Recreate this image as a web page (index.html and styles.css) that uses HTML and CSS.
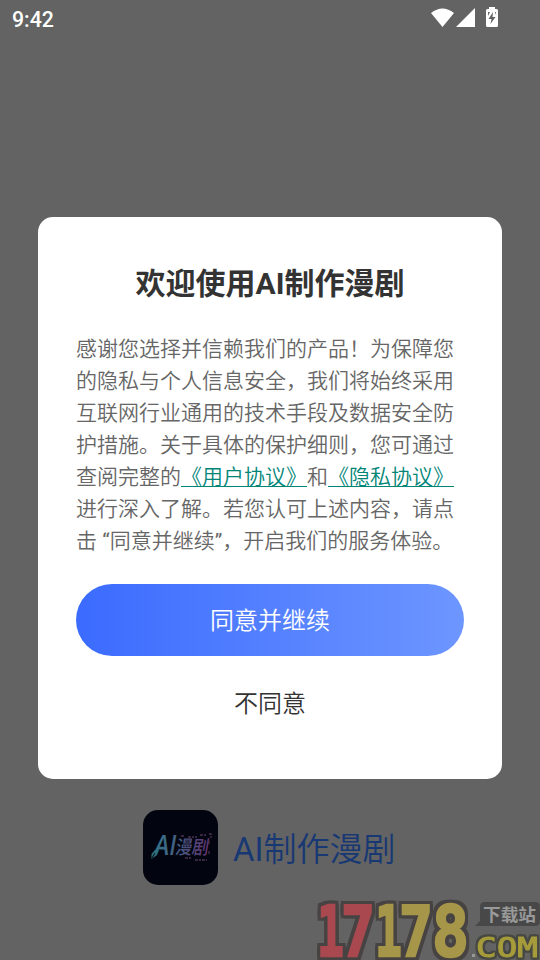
FILE: index.html
```html
<!DOCTYPE html>
<html lang="zh-CN">
<head>
<meta charset="utf-8">
<title>AI制作漫剧</title>
<link rel="stylesheet" href="styles.css">
</head>
<body>
<div class="screen">
  <header class="status">
    <span class="clock">9:42</span>
    <svg class="status-icons" width="70" height="22" viewBox="0 0 70 22">
      <path d="M1 5Q12.500-4 24 5L12.500 19Z"/>
      <path d="M45 0V19H26Z"/>
      <path d="M59 1V-1H65V1H66.500Q68 1 68 2.500V17.500Q68 19 66.500 19H57.500Q56 19 56 17.500V2.500Q56 1 57.500 1Z"/>
      <path class="bolt" d="M63 4L58.500 11H61.500L60.500 16L65.500 9H62.500ZM58 4H60L58 8ZM65 4H66V7Z"/>
    </svg>
  </header>
  <main class="dialog">
    <h1>欢迎使用AI制作漫剧</h1>
    <p class="terms">感谢您选择并信赖我们的产品！为保障您<br>的隐私与个人信息安全，我们将始终采用<br>互联网行业通用的技术手段及数据安全防<br>护措施。关于具体的保护细则，您可通过<br>查阅完整的<a>《用户协议》</a>和<a>《隐私协议》</a><br>进行深入了解。若您认可上述内容，请点<br>击<span class="latin"> “</span>同意并继续<span class="latin">”</span>，开启我们的服务体验。</p>
    <button class="agree">同意并继续</button>
    <button class="decline">不同意</button>
  </main>
  <footer class="brand">
    <svg class="logo" width="75" height="75" viewBox="0 0 75 75">
      <defs><linearGradient id="ink" gradientUnits="userSpaceOnUse" x1="8" y1="0" x2="76" y2="0"><stop offset="0" stop-color="#2e7f8a"/><stop offset=".5" stop-color="#435a80"/><stop offset="1" stop-color="#6b3174"/></linearGradient></defs>
      <rect width="75" height="75" rx="15" fill="#02050f"/>
      <g transform="skewX(-10)" fill="url(#ink)">
        <text class="logo-ai" x="18" y="45" textLength="22" lengthAdjust="spacingAndGlyphs">AI</text>
        <text class="logo-cn" x="39.500" y="44.500" textLength="33" lengthAdjust="spacingAndGlyphs">漫剧</text>
      </g>
      <path d="M12 40L8.500 44V49L14 45L16 40Z" fill="#2e7280"/>
      <path d="M9 48L12 43" stroke="#02050f"/>
      <path d="M38 26H41M45 27H54M57 25H64M66 24H68V28M66 31V35M66 41V45M42 48H49M52 50H64" fill="none" stroke="#493153" stroke-width="1.300" stroke-dasharray="3 1 2 1"/>
    </svg>
    <span class="brand-name"><span class="latin">AI</span>制作漫剧</span>
  </footer>
  <svg class="watermark" width="230" height="70" viewBox="0 0 230 70">
    <path class="bubble" d="M175 12H225Q230 12 230 17V31Q230 36 225 36H165L170 31V17Q170 12 175 12Z"/>
    <g class="digits">
      <g class="red">
        <text x="7" y="66" textLength="27" lengthAdjust="spacingAndGlyphs">1</text>
        <text x="31" y="66" textLength="34" lengthAdjust="spacingAndGlyphs">7</text>
      </g>
      <g class="gold">
        <text x="65" y="66" textLength="27" lengthAdjust="spacingAndGlyphs">1</text>
        <text x="89" y="66" textLength="34" lengthAdjust="spacingAndGlyphs">7</text>
        <text x="122" y="66" textLength="37" lengthAdjust="spacingAndGlyphs">8</text>
      </g>
    </g>
    <text class="station" x="173" y="31" textLength="53" lengthAdjust="spacingAndGlyphs">下载站</text>
    <rect x="162" y="64" width="3" height="3" fill="#999"/>
    <text class="com" x="166" y="67" textLength="62" lengthAdjust="spacingAndGlyphs">COM</text>
  </svg>
</div>
</body>
</html>
```
FILE: styles.css
```css
* { box-sizing: border-box; }
body { margin: 0; font-family: Roboto, "Noto Sans CJK SC", sans-serif; }
.screen {
  position: relative;
  width: 540px;
  height: 960px;
  overflow: hidden;
  background: #636363;
  display: flex;
  flex-direction: column;
  align-items: center;
}
.status {
  width: 100%;
  height: 217px;
  padding: 8px 40px 0 12px;
  display: flex;
  justify-content: space-between;
  align-items: flex-start;
  color: #fff;
}
.clock { font-size: 21.3px; line-height: 23px; font-weight: 500; }
.status-icons { fill: #fff; overflow: visible; }
.status-icons .bolt { fill: #636363; }
.latin { font-weight: 400; }
.dialog {
  width: 464px;
  height: 562px;
  padding: 45px 38px 0;
  border-radius: 15px;
  background: #fff;
}
h1 {
  margin: 0;
  font-size: 30px;
  line-height: 44px;
  font-weight: 700;
  text-align: center;
  color: #333;
}
.terms {
  margin: 27px 0 0;
  font-size: 21px;
  line-height: 32px;
  font-weight: 350;
  color: #666;
  white-space: nowrap;
}
.terms a { color: #008577; text-decoration: underline; text-decoration-thickness: 1px; text-underline-offset: 2px; }
button { display: block; width: 100%; height: 72px; padding: 0 0 3px; border: 0; font: inherit; font-size: 24px; font-weight: 350; }
.agree { margin-top: 27px; border-radius: 36px; color: #fff; background: linear-gradient(90deg, #3b6bff, #6d96ff); }
.decline { margin-top: 11px; color: #333; background: transparent; }
.brand { display: flex; align-items: center; gap: 15px; margin-top: 31px; width: 254px; }
.logo { flex: none; }
.brand-name { padding-top: 4px; font-size: 33px; line-height: 40px; font-weight: 350; color: #183873; white-space: nowrap; }
.logo-ai { font: 600 28px "Open Sans", sans-serif; }
.logo-cn { font: 500 19px "Noto Sans CJK SC", sans-serif; }
.watermark { position: absolute; left: 310px; top: 890px; }
.bubble { fill: #484848; }
.digits {
  font: 700 70px "DejaVu Sans Mono", monospace;
  stroke-width: 2.5px;
  filter: drop-shadow(3px 0 0 #484343) drop-shadow(-3px 0 0 #484343) drop-shadow(0 3px 0 #484343) drop-shadow(0 -3px 0 #484343);
}
.red { fill: #a9494f; stroke: #a9494f; }
.gold { fill: #a69649; stroke: #a69649; }
.station { font: 700 17px "Noto Sans CJK SC", sans-serif; fill: #999; }
.com { font: 400 27px "DejaVu Sans Mono", monospace; fill: #a69c3b; stroke: #a69c3b; stroke-width: 1px; filter: drop-shadow(2px 0 0 #484843) drop-shadow(-2px 0 0 #484843) drop-shadow(0 2px 0 #484843) drop-shadow(0 -2px 0 #484843); }
```
